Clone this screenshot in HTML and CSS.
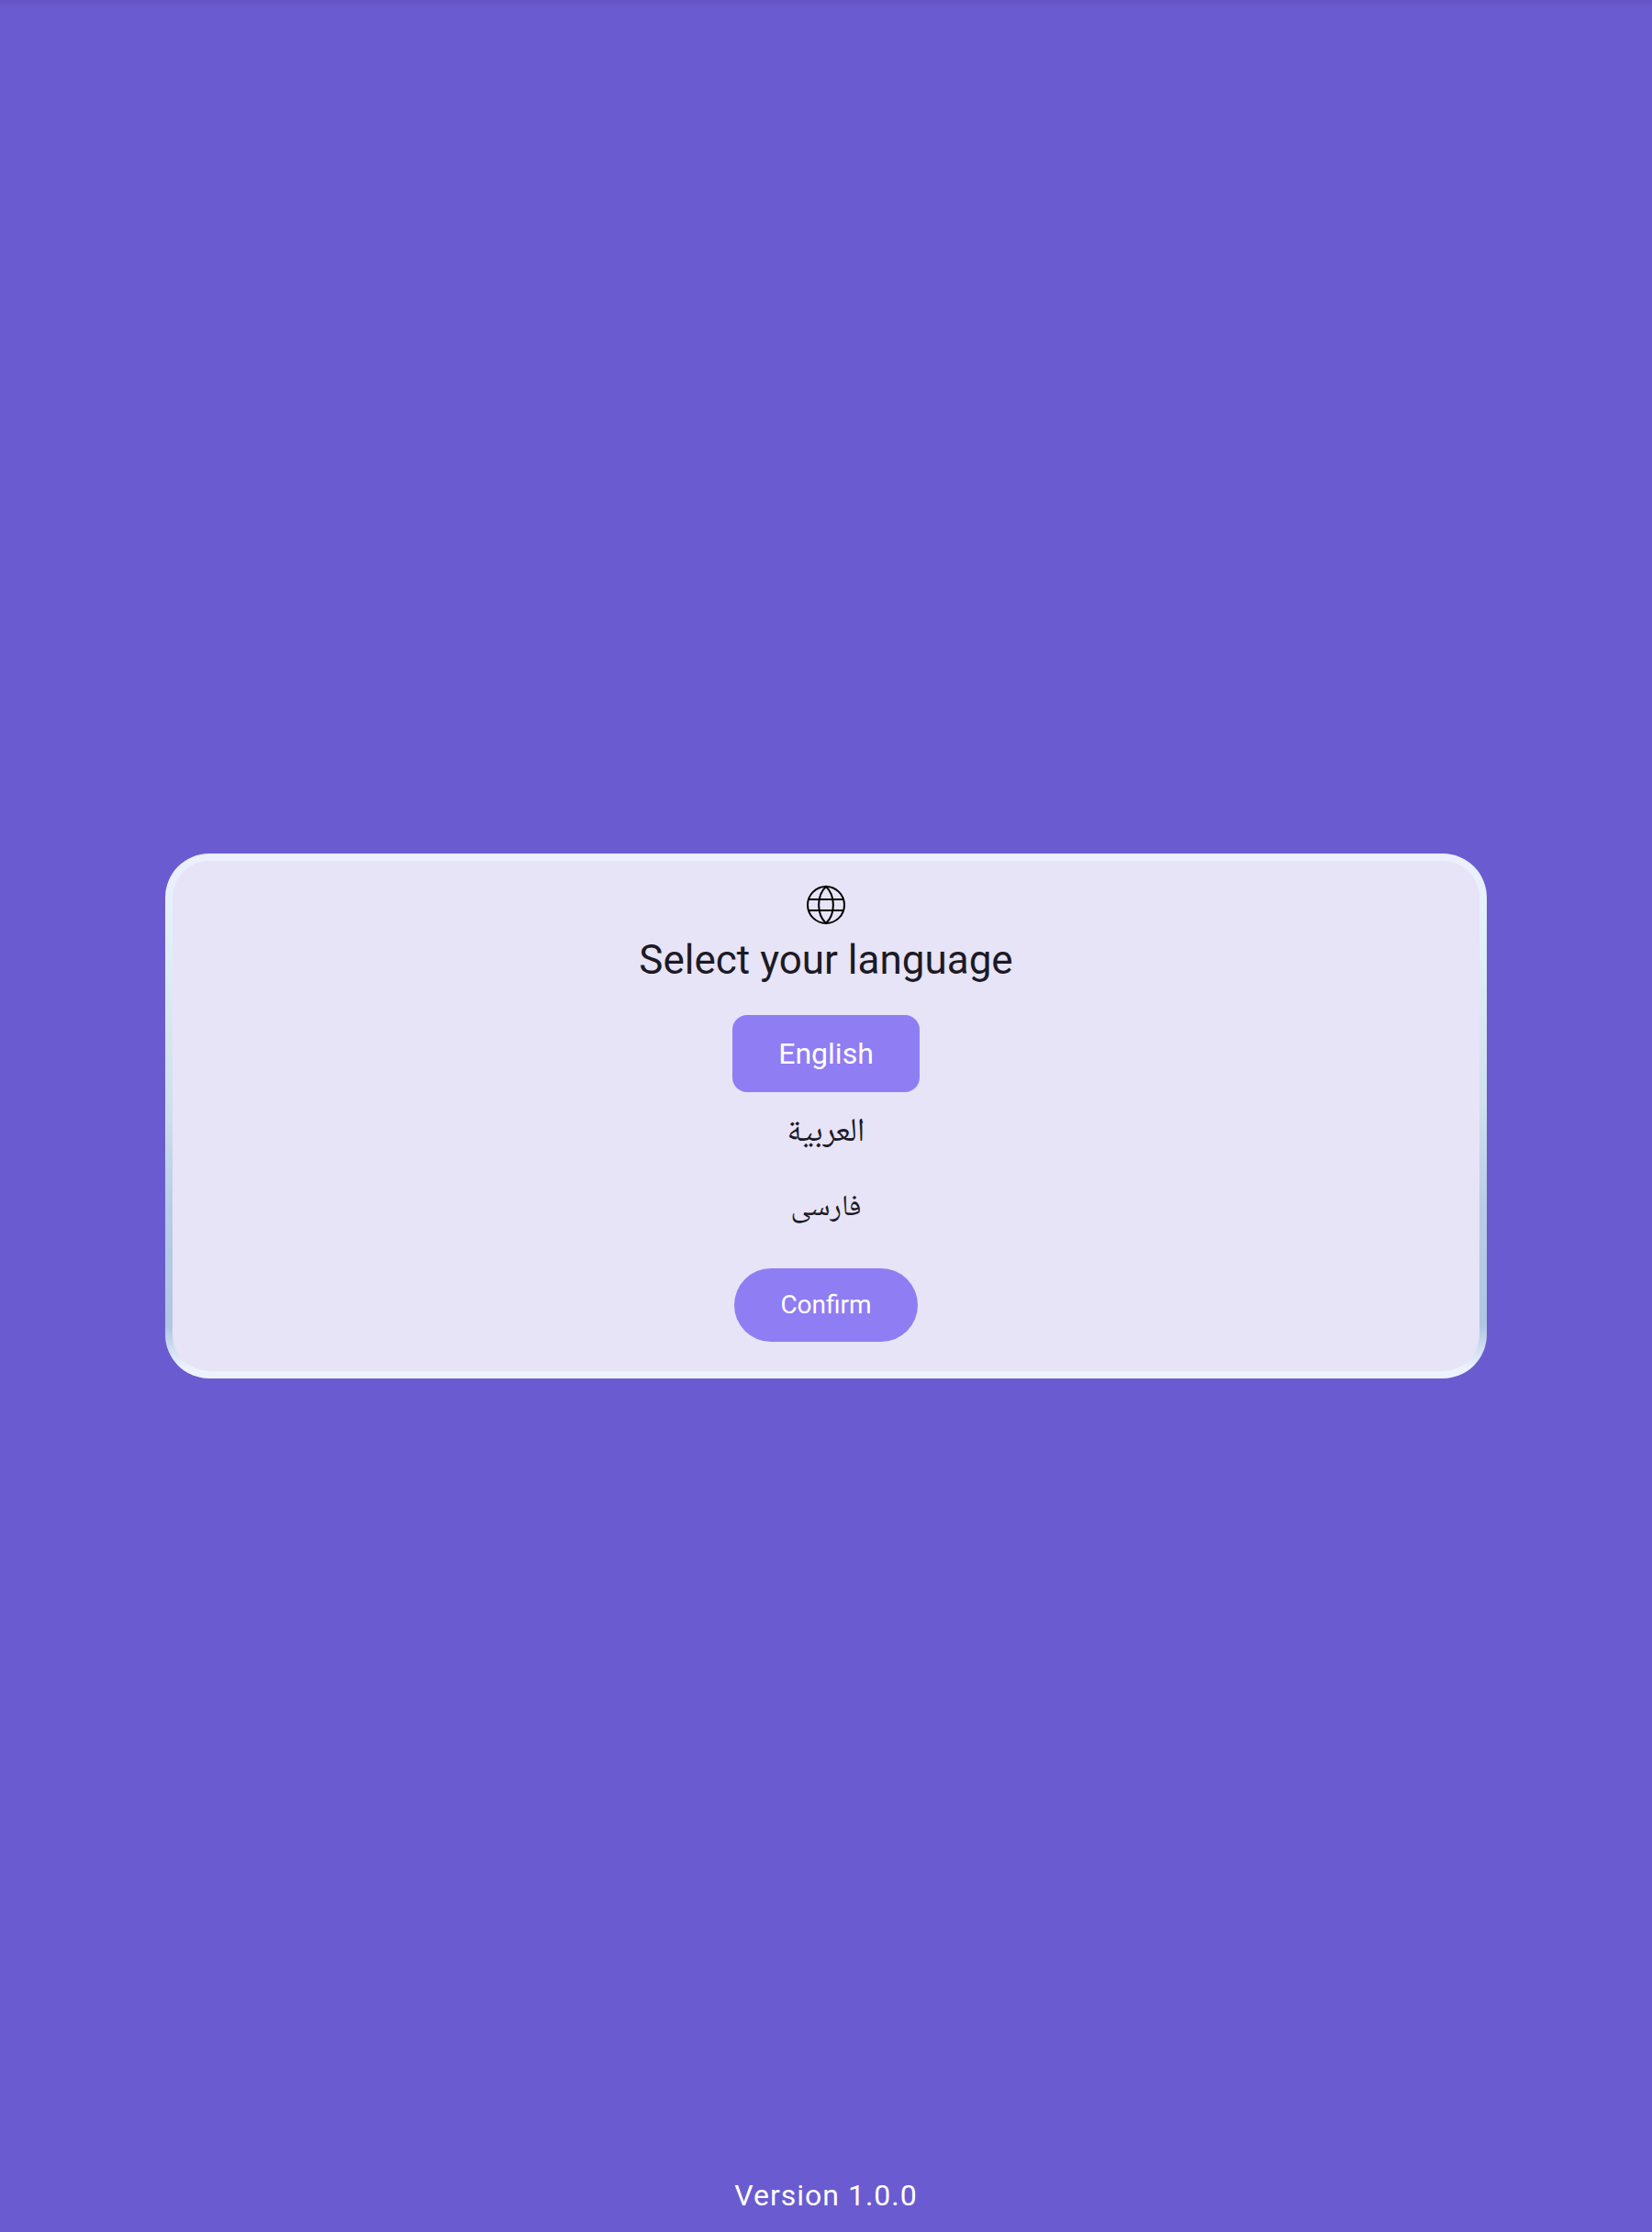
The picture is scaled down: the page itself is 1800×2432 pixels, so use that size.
FILE: index.html
```html
<!DOCTYPE html>
<html lang="en">
<head>
<meta charset="utf-8">
<meta name="viewport" content="width=device-width, initial-scale=1">
<title>Select your language</title>
<link rel="stylesheet" href="styles.css">
</head>
<body>
<div class="screen">
  <main class="card">
    <div class="panel">
      <svg class="globe" viewBox="0 0 48 48" fill="none" stroke="currentColor" stroke-width="2" aria-hidden="true">
        <circle cx="24" cy="24" r="20"/>
        <path d="M24 4C13.500 14 13.500 34 24 44C34.500 34 34.500 14 24 4Z"/>
        <path d="M5 18H43M5 30H43"/>
      </svg>
      <h1 class="title">Select your language</h1>
      <div class="languages">
        <button class="language language-selected" type="button" aria-pressed="true">English</button>
        <button class="language language-arabic" type="button" lang="ar" dir="rtl" aria-pressed="false">العربية</button>
        <button class="language" type="button" lang="fa" dir="rtl" aria-pressed="false">فارسی</button>
      </div>
      <button class="confirm" type="button">Confirm</button>
    </div>
  </main>
  <footer class="version">Version 1.0.0</footer>
</div>
</body>
</html>
```

FILE: styles.css
```css
* {
  box-sizing: border-box;
}

body {
  margin: 0;
  font-family: Roboto, "Noto Naskh Arabic", "Noto Sans Arabic", "DejaVu Sans", sans-serif;
  color: #1c1a26;
  background: #6b5bd0;
}

.screen {
  display: grid;
  grid-template-rows: 1fr auto 1fr;
  justify-items: center;
  min-height: 100vh;
  background: linear-gradient(#6454c4, #6b5bd0 10px);
}

.card {
  grid-row: 2;
  width: 80%;
  padding: 8px;
  border-radius: 48px;
  background: linear-gradient(#edf0ff, #e2f0f8 14%, #cde0ec 48%, #b8cce6 68%, #aec6e2 90%, #edf3fe 98%);
}

.panel {
  display: flex;
  flex-direction: column;
  align-items: center;
  padding: 24px 24px 32px;
  border-radius: 40px;
  background: #e7e4f7;
}

.globe {
  width: 48px;
  height: 48px;
  color: #000;
}

.title {
  margin: 8px 0 32px;
  font-size: 44px;
  line-height: 56px;
  font-weight: 400;
}

.languages {
  display: flex;
  flex-direction: column;
  align-items: center;
}

.language,
.confirm {
  border: 0;
  padding: 0 50px;
  font-family: inherit;
  color: inherit;
  background: transparent;
  cursor: pointer;
}

.language {
  height: 82px;
  border-radius: 16px;
  font-size: 32px;
  line-height: 48px;
}

.language-arabic {
  font-size: 36px;
}

.language-selected {
  height: 84px;
  color: #fff;
  background: #8f7df3;
}

.confirm {
  height: 80px;
  margin-top: 28px;
  border-radius: 40px;
  font-size: 28px;
  line-height: 40px;
  font-weight: 400;
  color: #fff;
  background: #8f7df3;
}

.version {
  grid-row: 3;
  align-self: end;
  padding-bottom: 16px;
  font-size: 32px;
  line-height: 48px;
  letter-spacing: 1px;
  color: #fff;
}
```
